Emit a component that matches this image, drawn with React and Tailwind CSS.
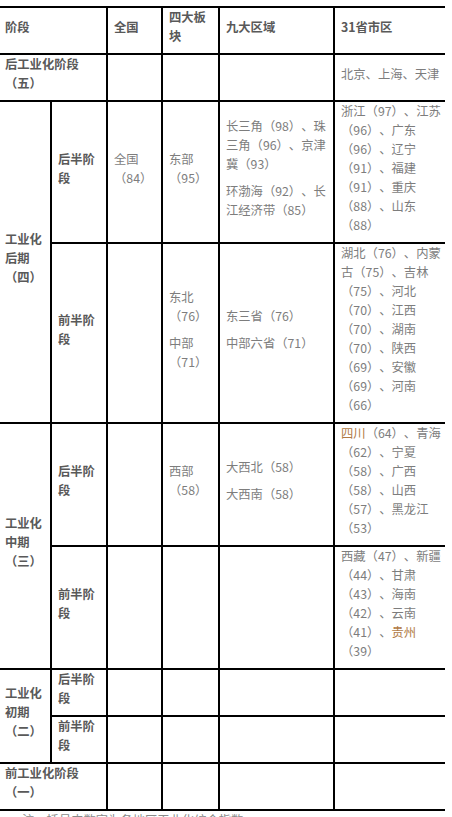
const font = { fontFamily: '"Microsoft YaHei", "Noto Sans CJK SC", sans-serif' };

// one paragraph, lines broken where the source breaks them
function P({ lines }) {
  return (
    <p className="whitespace-nowrap [&+p]:mt-[8px]">
      {lines.map((l, i) => (
        <span key={i}>
          {i > 0 && <br />}
          {l}
        </span>
      ))}
    </p>
  );
}

const cell = "border-2 border-black align-middle pt-0 pb-[7px] pr-[4px]";

function Td({ bold, first, last, paras = [], ...rest }) {
  return (
    <td
      {...rest}
      className={`${cell} ${first ? "border-l-0 pl-[5px]" : "pl-[6px]"} ${last ? "border-r-0" : ""} ${
        bold ? "font-bold text-[#595959]" : "text-[#7d7d7d]"
      }`}
    >
      {paras.map((p, i) => (
        <P key={i} lines={p} />
      ))}
    </td>
  );
}

function Empty({ last }) {
  return <Td last={last} paras={[]} />;
}

const half = (label) => [[label.slice(0, 3), label.slice(3)]];

export default function App() {
  return (
    <div
      className="min-h-screen bg-white pt-[6px] text-[12.3px] leading-[19px] [text-spacing-trim:space-all]"
      style={font}
    >
      <table className="w-[445px] border-collapse table-fixed">
        <colgroup>
          <col className="w-[51px]" />
          <col className="w-[56px]" />
          <col className="w-[55px]" />
          <col className="w-[57px]" />
          <col className="w-[115px]" />
          <col className="w-[111px]" />
        </colgroup>
        <tbody>
          <tr>
            <Td first colSpan={2} bold paras={[["阶段"]]} />
            <Td bold paras={[["全国"]]} />
            <Td bold paras={[["四大板", "块"]]} />
            <Td bold paras={[["九大区域"]]} />
            <Td last bold paras={[["31省市区"]]} />
          </tr>
          <tr>
            <Td first colSpan={2} bold paras={[["后工业化阶段", "（五）"]]} />
            <Empty />
            <Empty />
            <Empty />
            <Td last paras={[["北京、上海、天津"]]} />
          </tr>
          <tr>
            <Td first rowSpan={2} bold paras={[["工业化", "后期", "（四）"]]} />
            <Td bold paras={half("后半阶段")} />
            <Td paras={[["全国", "（84）"]]} />
            <Td paras={[["东部", "（95）"]]} />
            <Td
              paras={[
                ["长三角（98）、珠", "三角（96）、京津", "冀（93）"],
                ["环渤海（92）、长", "江经济带（85）"],
              ]}
            />
            <Td
              last
              paras={[
                ["浙江（97）、江苏", "（96）、广东", "（96）、辽宁", "（91）、福建", "（91）、重庆", "（88）、山东", "（88）"],
              ]}
            />
          </tr>
          <tr>
            <Td bold paras={half("前半阶段")} />
            <Empty />
            <Td paras={[["东北", "（76）"], ["中部", "（71）"]]} />
            <Td paras={[["东三省（76）"], ["中部六省（71）"]]} />
            <Td
              last
              paras={[
                [
                  "湖北（76）、内蒙",
                  "古（75）、吉林",
                  "（75）、河北",
                  "（70）、江西",
                  "（70）、湖南",
                  "（70）、陕西",
                  "（69）、安徽",
                  "（69）、河南",
                  "（66）",
                ],
              ]}
            />
          </tr>
          <tr>
            <Td first rowSpan={2} bold paras={[["工业化", "中期", "（三）"]]} />
            <Td bold paras={half("后半阶段")} />
            <Empty />
            <Td paras={[["西部", "（58）"]]} />
            <Td paras={[["大西北（58）"], ["大西南（58）"]]} />
            <td className={`${cell} border-r-0 pl-[6px] text-[#7d7d7d]`}>
              <p className="whitespace-nowrap">
                <span className="text-[#b07a45]">四川</span>（64）、青海
                <br />
                （62）、宁夏
                <br />
                （58）、广西
                <br />
                （58）、山西
                <br />
                （57）、黑龙江
                <br />
                （53）
              </p>
            </td>
          </tr>
          <tr>
            <Td bold paras={half("前半阶段")} />
            <Empty />
            <Empty />
            <Empty />
            <td className={`${cell} border-r-0 pl-[6px] text-[#7d7d7d]`}>
              <p className="whitespace-nowrap">
                西藏（47）、新疆
                <br />
                （44）、甘肃
                <br />
                （43）、海南
                <br />
                （42）、云南
                <br />
                （41）、<span className="text-[#b07a45]">贵州</span>
                <br />
                （39）
              </p>
            </td>
          </tr>
          <tr>
            <Td first rowSpan={2} bold paras={[["工业化", "初期", "（二）"]]} />
            <Td bold paras={half("后半阶段")} />
            <Empty />
            <Empty />
            <Empty />
            <Empty last />
          </tr>
          <tr>
            <Td bold paras={half("前半阶段")} />
            <Empty />
            <Empty />
            <Empty />
            <Empty last />
          </tr>
          <tr>
            <Td first colSpan={2} bold paras={[["前工业化阶段", "（一）"]]} />
            <Empty />
            <Empty />
            <Empty />
            <Empty last />
          </tr>
        </tbody>
      </table>
      <p className="pl-[22px] leading-[19px] text-[#8a8a8a]">注：括号内数字为各地区工业化综合指数。</p>
    </div>
  );
}
